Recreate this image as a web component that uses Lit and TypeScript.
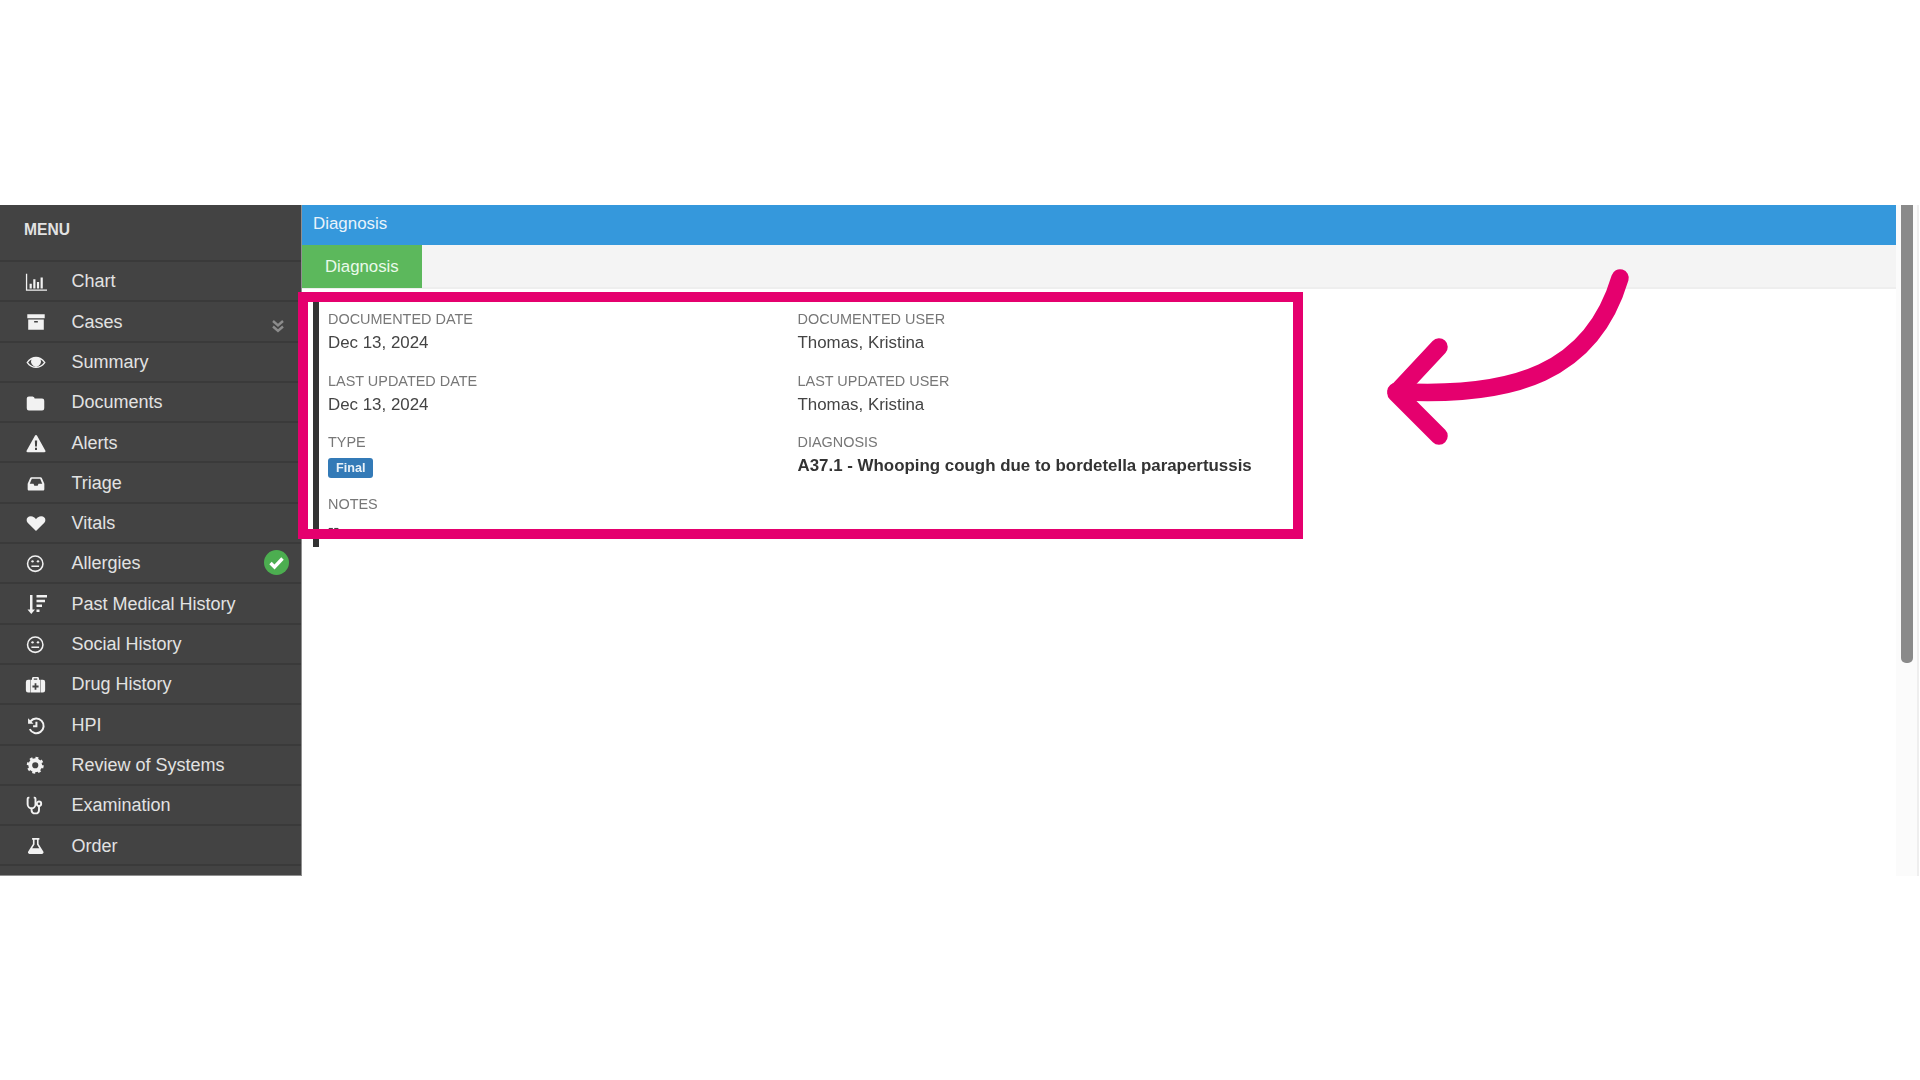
import { LitElement, html, css, svg } from "lit";
import { customElement } from "lit/decorators.js";

const icons: Record<string, [number, unknown]> = {
  chart: [22, svg`<path d="M1 3h1.400v17.200H24v1.400H1z M5 14h2.400v5H5z M9 9h2.400v10H9z M13 12h2.400v7H13z M17 7h2.400v12H17z"/>`],
  archive: [22, svg`<path fill-rule="evenodd" d="M2.500 3.500h19v4.500h-19z M3.500 9.200h17v11.300h-17z M10 11v1.600h4V11z"/>`],
  eye: [20, svg`<path fill-rule="evenodd" d="M0.500 12.500C4 7.500 8 5.800 12 5.800s8 1.700 11.500 6.700C20 17.500 16 19.200 12 19.200S4 17.500.5 12.500z M2.500 12.500C5.500 16 8.500 17.500 12 17.500s6.500-1.500 9.500-5c-1.200-1.500-2.600-2.700-4-3.500a6 6 0 1 1-11 0c-1.400.8-2.800 2-4 3.500z"/>`],
  folder: [21, svg`<path d="M2 7.500A2.500 2.500 0 0 1 4.500 5h4.200a2.500 2.500 0 0 1 2.300 2.500h8.500a2.500 2.500 0 0 1 2.500 2.500v8.500a2.500 2.500 0 0 1-2.500 2.500h-15A2.500 2.500 0 0 1 2 18.500z"/>`],
  warning: [20, svg`<path fill-rule="evenodd" d="M12 2.500c.6 0 1 .3 1.300.8l10 18c.5 1-.2 1.700-1.200 1.700H1.900c-1 0-1.700-.7-1.200-1.700l10-18c.3-.5.700-.8 1.300-.8z M10.600 9l.3 7.200h2.200l.3-7.200z M10.800 17.800v2.600h2.400v-2.600z"/>`],
  inbox: [20, svg`<path fill-rule="evenodd" d="M6.500 5h11c.7 0 1.200.3 1.500.9l3 7.100v6.500c0 1-.7 1.500-1.500 1.500h-17C2.700 21 2 20.500 2 19.500V13l3-7.100c.3-.6.800-.9 1.500-.9z M7 7l-2.500 6H9l1 2.200h4L15 13h4.500L17 7z"/>`],
  heart: [20, svg`<path d="M12 21.500 2 11.800C-.5 8.800.8 4 5.800 4c2.800 0 4.900 1.700 6.200 3.500C13.300 5.700 15.400 4 18.200 4c5 0 6.300 4.800 3.800 7.800z"/>`],
  smile: [20.500, svg`<g fill="none" stroke="currentColor" stroke-width="1.800"><circle cx="12" cy="12.500" r="9"/><path d="M7.500 15.500h9"/></g><circle cx="8.800" cy="9.800" r="1.400"/><circle cx="15.200" cy="9.800" r="1.400"/>`],
  sort: [24, svg`<path d="M6 3h2.500v14.500H11L7.250 22 3.500 17.500H6z M12.500 3H23v2.400H12.500z M12.500 7.800H21v2.400h-8.500z M12.500 12.600H18V15h-5.500z M12.500 17.400h3V20h-3z"/>`],
  medkit: [21, svg`<path fill-rule="evenodd" d="M8 6.500V5.200C8 4 9 3.500 10 3.500h4c1 0 2 .5 2 1.700v1.300h1.200v14.500H6.800V6.500z M10 6.500h4V5.200h-4z M11 10.500v2.500H8.500v2.500H11V18h2v-2.500h2.500V13H13v-2.500z"/><path d="M1 9a2.500 2.500 0 0 1 2.500-2.500h2.800V21H3.500A2.500 2.500 0 0 1 1 18.500z M23 9a2.500 2.500 0 0 0-2.500-2.500h-2.800V21h2.800a2.500 2.500 0 0 0 2.500-2.500z"/>`],
  history: [20, svg`<g fill="none" stroke="currentColor" stroke-width="2.400"><path d="M5.500 7.500A8.800 8.800 0 1 1 4.500 17"/><path d="M12.500 8v5.500h-4"/></g><path d="M2.500 4 9 10.500H2.500z"/>`],
  cog: [18.500, svg`<circle cx="12" cy="12" r="6.500" fill="none" stroke="currentColor" stroke-width="5"/><circle cx="12" cy="12" r="9.300" fill="none" stroke="currentColor" stroke-width="3.400" stroke-dasharray="3.600 3.705"/>`],
  steth: [21, svg`<g fill="none" stroke="currentColor" stroke-width="2.200"><path d="M5 3H4.200C3.500 3 3 3.600 3 4.200v6.300c0 3 2.500 4.700 4.500 4.700S12 13.500 12 10.500V4.200C12 3.600 11.500 3 10.800 3H10"/><path d="M7.500 15v2c0 2.500 2 4 4.300 4s4.200-1.500 4.200-4v-4.500"/><circle cx="16" cy="10" r="2.500"/></g>`],
  flask: [19.500, svg`<path fill-rule="evenodd" d="M7.500 2.500h9V4.500h-1v5.300l5.800 9.400c.8 1.400 0 2.800-1.500 2.800H4.200c-1.500 0-2.300-1.400-1.500-2.800l5.800-9.400V4.500h-1z M10.500 4.500v5.900L7.600 15h8.800l-2.900-4.600V4.500z"/>`],
};

const menu = [
  ["chart", "Chart"], ["archive", "Cases"], ["eye", "Summary"], ["folder", "Documents"],
  ["warning", "Alerts"], ["inbox", "Triage"], ["heart", "Vitals"], ["smile", "Allergies"],
  ["sort", "Past Medical History"], ["smile", "Social History"], ["medkit", "Drug History"],
  ["history", "HPI"], ["cog", "Review of Systems"], ["steth", "Examination"], ["flask", "Order"],
];

@customElement("app-root")
export class AppRoot extends LitElement {
  static styles = css`
    :host { display: block; position: relative; height: 1080px; background: #fff; overflow: hidden;
      font-family: "Liberation Sans", Arial, sans-serif; }
    .spacer { height: 205px; }
    .app { display: flex; height: 670.500px; filter: blur(0.5px); }
    .side { flex: none; background: #434343; color: #e2e2e2; border-right: 1px solid #8f8f8f;
      border-bottom: 1px solid #8f8f8f; box-sizing: border-box; width: 302px; overflow: hidden; }
    .menu-title { height: 57px; box-sizing: border-box; padding: 16px 0 0 24px; font-weight: 700; font-size: 15.600px;
      line-height: 18px; border-bottom: 2px solid #3a3a3a; }
    .row { height: 40.300px; box-sizing: border-box; display: flex; align-items: center; border-bottom: 2px solid #3a3a3a;
      font-size: 18px; }
    .ibox { width: 22px; height: 24px; margin-left: 24.500px; margin-right: 25px; margin-top: 1px; flex: none;
      display: flex; align-items: center; justify-content: center; }
    .ico { fill: currentColor; flex: none; color: #f2f2f2; }
    .lbl { flex: 1; margin-top: 1.500px; }
    .chev { width: 14px; height: 14px; margin-right: 16.500px; margin-top: 10px; fill: none; stroke: #8c8c8c; stroke-width: 2.400; }
    .ok { width: 25px; height: 25px; margin-right: 12px; margin-top: -2px; flex: none; }
    .main { flex: none; width: 1594px; display: flex; flex-direction: column; }
    .bar { height: 40px; background: #3598dc; color: #e8f3fb; font-size: 16.900px; padding-left: 11px; line-height: 38px; box-sizing: border-box; flex: none; }
    .tabs { height: 44px; background: #f4f4f4; border-bottom: 2px solid #eee; box-sizing: border-box; flex: none; }
    .tab { width: 120px; height: 42.500px; background: #5cb85c; color: #eafaea; font-size: 16.800px; line-height: 44px; padding-left: 23px; box-sizing: border-box; }
    .detail { margin: 7px 0 0 11px; height: 251px; border-left: 6px solid #333; padding: 13px 0 0 9px; box-sizing: border-box; overflow: hidden;
      display: grid; grid-template-columns: 469.500px 1fr; grid-auto-rows: 44px; row-gap: 17.500px; }
    .k { font-size: 14.450px; line-height: 20px; color: #777; }
    .v { font-size: 16.900px; line-height: 24px; color: #444; margin-top: 2px; }
    .b { font-weight: 700; color: #333; font-size: 16.900px; }
    .badge { display: inline-block; background: #337ab7; color: #e8f1f8; font-weight: 700; font-size: 12.600px; line-height: 20.500px;
      padding: 0 8px; border-radius: 3px; margin-top: 3.500px; vertical-align: top; }
    .notes { grid-column: 1 / 3; }
    .track { flex: none; width: 23px; background: #fbfbfb; border-right: 2px solid #eee; box-sizing: border-box; padding-left: 5px; }
    .thumb { width: 12px; height: 458px; background: #8a8a8a; border-radius: 0 0 5px 5px; }
    .mark { position: absolute; left: 297.500px; top: 292px; width: 1005px; height: 247px; border: 10px solid #e5006e; box-sizing: border-box; }
    .arrow { position: absolute; left: 1370px; top: 260px; width: 270px; height: 200px; fill: none; stroke: #e5006e; stroke-width: 17.500;
      stroke-linecap: round; stroke-linejoin: round; }
  `;

  field(k: string, v: unknown) {
    return html`<div><div class="k">${k}</div><div class="v">${v}</div></div>`;
  }

  render() {
    return html`
      <div class="spacer"></div>
      <div class="app">
        <div class="side">
          <div class="menu-title">MENU</div>
          ${menu.map(([ic, t]) => html`<div class="row">
            <span class="ibox"><svg class="ico" style="width:${icons[ic][0]}px;height:${icons[ic][0]}px" viewBox="0 0 24 24">${icons[ic][1]}</svg></span>
            <span class="lbl">${t}</span>
            ${t === "Cases" ? html`<svg class="chev" viewBox="0 0 14 14"><path d="M2 2l5 4.500L12 2M2 7.500l5 4.500 5-4.500"/></svg>` : ""}
            ${t === "Allergies" ? html`<svg class="ok" viewBox="0 0 25 25"><circle cx="12.500" cy="12.500" r="12.500" fill="#4cae50"/><path d="M6.500 13l4 4 8-8.500" fill="none" stroke="#fff" stroke-width="3.400"/></svg>` : ""}
          </div>`)}
        </div>
        <div class="main">
          <div class="bar">Diagnosis</div>
          <div class="tabs"><div class="tab">Diagnosis</div></div>
          <div class="detail">
            ${this.field("DOCUMENTED DATE", "Dec 13, 2024")}
            ${this.field("DOCUMENTED USER", "Thomas, Kristina")}
            ${this.field("LAST UPDATED DATE", "Dec 13, 2024")}
            ${this.field("LAST UPDATED USER", "Thomas, Kristina")}
            ${this.field("TYPE", html`<span class="badge">Final</span>`)}
            ${this.field("DIAGNOSIS", html`<span class="b">A37.1 - Whooping cough due to bordetella parapertussis</span>`)}
            <div class="notes">${this.field("NOTES", "--")}</div>
          </div>
        </div>
        <div class="track"><div class="thumb"></div></div>
      </div>
      <div class="mark"></div>
      <svg class="arrow" viewBox="1370 260 270 200">
        <path d="M1620 278C1592 372 1515 398 1396 391.500"/>
        <path d="M1439 347 1396 393 1439 436"/>
      </svg>
    `;
  }
}
